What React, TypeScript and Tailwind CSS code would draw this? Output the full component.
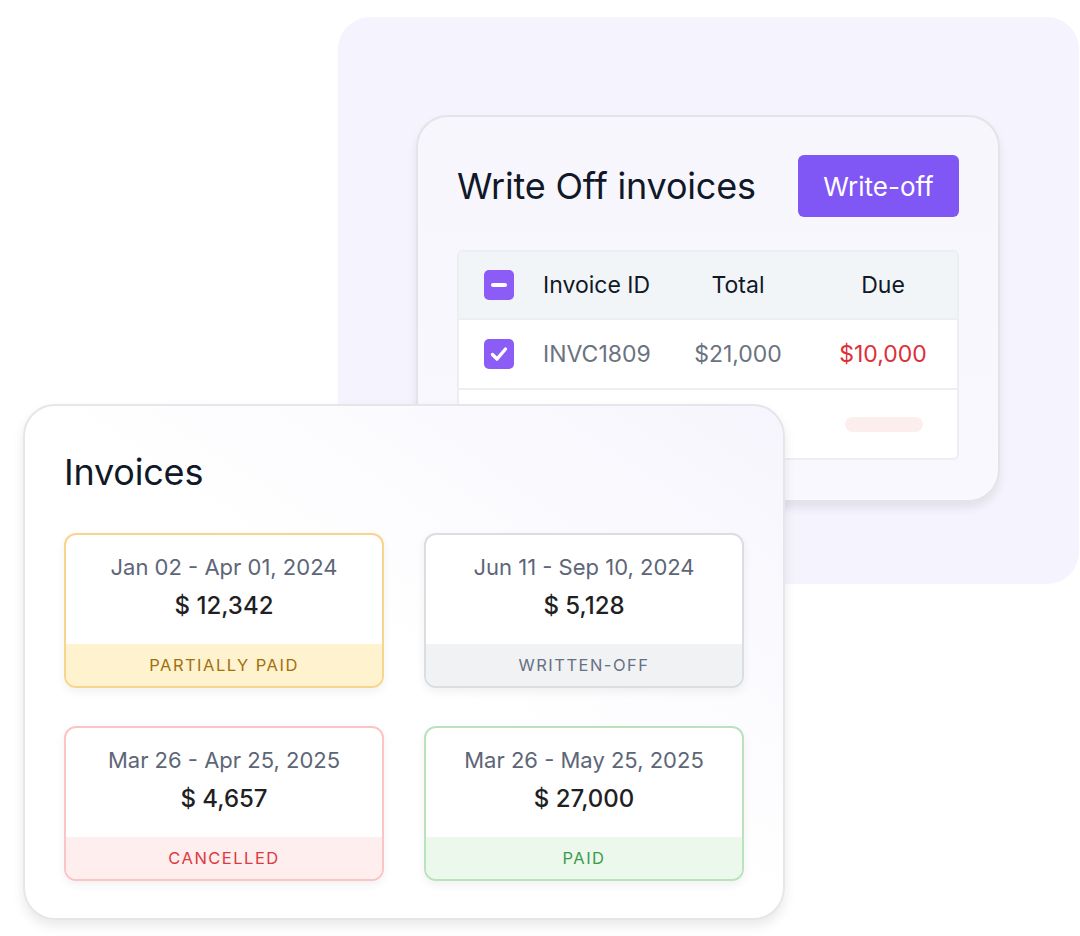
import React from "react";

type Status = {
  range: string;
  amount: string;
  label: string;
  box: string;
  band: string;
};

const invoices: Status[] = [
  {
    range: "Jan 02 - Apr 01, 2024",
    amount: "$ 12,342",
    label: "PARTIALLY PAID",
    box: "border-[#f9d48c]",
    band: "bg-[#fff2cf] text-[#a1700c]",
  },
  {
    range: "Jun 11 - Sep 10, 2024",
    amount: "$ 5,128",
    label: "WRITTEN-OFF",
    box: "border-[#dadde2]",
    band: "bg-[#f1f2f4] text-[#677183]",
  },
  {
    range: "Mar 26 - Apr 25, 2025",
    amount: "$ 4,657",
    label: "CANCELLED",
    box: "border-[#fbc5c5]",
    band: "bg-[#ffeeee] text-[#dc3a3f]",
  },
  {
    range: "Mar 26 - May 25, 2025",
    amount: "$ 27,000",
    label: "PAID",
    box: "border-[#b9e2bd]",
    band: "bg-[#ebf8eb] text-[#3b9b4d]",
  },
];

function Check({ kind }: { kind: "minus" | "tick" }) {
  return (
    <div className="w-[30px] h-[30px] rounded-[5px] bg-[#8b5cf6] flex items-center justify-center">
      {kind === "minus" ? (
        <div className="w-[16px] h-[4px] rounded-full bg-white" />
      ) : (
        <svg width="22" height="22" viewBox="0 0 22 22" fill="none">
          <path
            d="M4.5 11.5l4.5 4.5 8.5-10"
            stroke="white"
            strokeWidth="3.4"
            strokeLinecap="round"
            strokeLinejoin="round"
          />
        </svg>
      )}
    </div>
  );
}

function WriteOffCard() {
  return (
    <div className="absolute left-[416px] top-[115px] w-[584px] h-[387px] rounded-[32px] border-2 border-[#e3e3e8] bg-gradient-to-b from-[#f7f6fd] to-[#f9f8fe] shadow-[0_6px_10px_rgba(0,0,0,0.08)] pt-[38px] pl-[39px] pr-[39px]">
      <div className="flex items-center justify-between">
        <h2 className="text-[36px] leading-none text-[#111827] tracking-[-0.2px]">
          Write Off invoices
        </h2>
        <button className="h-[62px] w-[161px] rounded-[6px] bg-[#8057f5] text-white text-[26px]">
          Write-off
        </button>
      </div>

      <div className="mt-[33px] rounded-[6px] border-2 border-[#edeef1] overflow-hidden bg-white">
        <div className="grid grid-cols-[84px_130px_130px_1fr] items-center h-[68px] bg-[#f2f5f8] border-b-2 border-[#edeef1] text-[23px] text-[#111827]">
          <div className="pl-[25px]">
            <Check kind="minus" />
          </div>
          <div>Invoice ID</div>
          <div className="text-center">Total</div>
          <div className="text-center pl-[6px]">Due</div>
        </div>
        <div className="grid grid-cols-[84px_130px_130px_1fr] items-center h-[70px] border-b-2 border-[#edeef1] text-[23px]">
          <div className="pl-[25px]">
            <Check kind="tick" />
          </div>
          <div className="text-[#6b7280]">INVC1809</div>
          <div className="text-center text-[#6b7280]">$21,000</div>
          <div className="text-center pl-[6px] text-[#dc2f3a]">$10,000</div>
        </div>
        <div className="h-[68px] flex items-center justify-end pr-[34px]">
          <div className="w-[78px] h-[15px] rounded-full bg-[#fdeeee]" />
        </div>
      </div>
    </div>
  );
}

function InvoiceTile({ item }: { item: Status }) {
  return (
    <div
      className={`rounded-[12px] border-2 ${item.box} bg-white overflow-hidden shadow-[0_4px_10px_rgba(0,0,0,0.06)] flex flex-col`}
    >
      <div className="h-[109px] flex flex-col items-center pt-[17px]">
        <div className="text-[22px] leading-[30px] text-[#5d6677]">{item.range}</div>
        <div className="mt-[9px] text-[24px] leading-[30px] font-medium text-[#1f1f24]">
          {item.amount}
        </div>
      </div>
      <div
        className={`h-[42px] flex items-center justify-center text-[16.5px] tracking-[0.09em] ${item.band}`}
      >
        {item.label}
      </div>
    </div>
  );
}

function InvoicesCard() {
  return (
    <div className="absolute left-[23px] top-[404px] w-[762px] h-[516px] rounded-[32px] border-2 border-[#e5e6ea] bg-gradient-to-bl from-[#f6f5fd] via-white to-white shadow-[0_6px_12px_rgba(0,0,0,0.09)] pt-[48px] pl-[39px]">
      <h2 className="text-[36px] leading-none text-[#111827] tracking-[-0.2px]">
        Invoices
      </h2>
      <div className="mt-[43px] grid grid-cols-[320px_320px] gap-x-[40px] gap-y-[38px]">
        {invoices.map((item) => (
          <InvoiceTile key={item.label} item={item} />
        ))}
      </div>
    </div>
  );
}

export default function App() {
  return (
    <div
      className="relative w-[1080px] h-[936px] bg-white overflow-hidden"
      style={{ fontFamily: "Inter, 'Noto Sans', sans-serif" }}
    >
      <div className="absolute left-[338px] top-[17px] w-[741px] h-[567px] rounded-[32px] bg-[#f5f4fe]" />
      <WriteOffCard />
      <InvoicesCard />
    </div>
  );
}
